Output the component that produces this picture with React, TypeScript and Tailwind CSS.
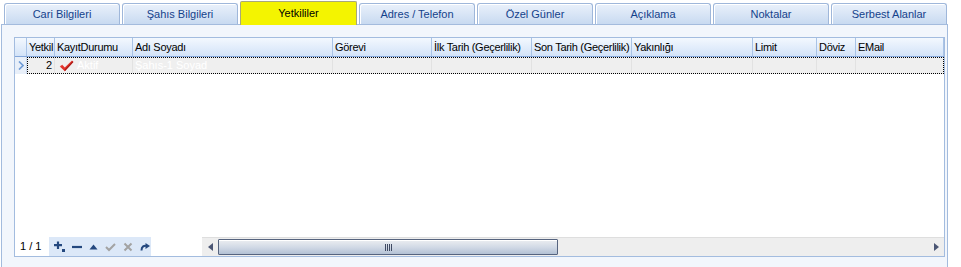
import React from "react";

const tabs = [
  "Cari Bilgileri",
  "Şahıs Bilgileri",
  "Yetkililer",
  "Adres / Telefon",
  "Özel Günler",
  "Açıklama",
  "Noktalar",
  "Serbest Alanlar",
];

const cols = [
  { w: 28, label: "Yetkil" },
  { w: 78, label: "KayıtDurumu" },
  { w: 200, label: "Adı Soyadı" },
  { w: 99, label: "Görevi" },
  { w: 100, label: "İlk Tarih (Geçerlilik)" },
  { w: 100, label: "Son Tarih (Geçerlilik)" },
  { w: 121, label: "Yakınlığı" },
  { w: 64, label: "Limit" },
  { w: 39, label: "Döviz" },
  { w: 88, label: "EMail" },
];

function Check() {
  return (
    <svg width="15" height="12" viewBox="0 0 15 12">
      <path d="M0.8 6.5 L3.2 4.8 L5.8 7.4 L13 0.6 L14.4 2 L5.8 11.2 Z" fill="#e3322b" />
      <path d="M5.8 11.2 L14.4 2 L13.6 1.3 L5.8 9.4 Z" fill="#a51a14" />
      <path d="M0.8 6.5 L3.2 4.8 L3.6 5.2 L1.6 6.8 Z" fill="#f06a62" />
    </svg>
  );
}

export default function App() {
  return (
    <div
      className="w-[961px] h-[267px] bg-white overflow-hidden flex flex-col text-[11px]"
      style={{ fontFamily: '"Liberation Sans", Arial, sans-serif' }}
    >
      {/* tab strip */}
      <div className="h-[24px] flex items-end pl-[4px] gap-[2px] relative z-10">
        {tabs.map((t) =>
          t === "Yetkililer" ? (
            <div
              key={t}
              className="w-[117px] h-[24px] -mb-[1px] border border-b-0 border-[#a8a87a] rounded-t-[2px] bg-[#f4f400] flex items-center justify-center text-black pb-[1px]"
            >
              {t}
            </div>
          ) : (
            <div
              key={t}
              className="w-[116px] h-[21px] border border-b-0 border-[#9fb7da] rounded-t-[3px] bg-gradient-to-b from-[#eaf1fb] to-[#c8daf1] shadow-[inset_1px_1px_0_#ffffff] flex items-center justify-center text-[#15428b] pt-[1px]"
            >
              {t}
            </div>
          )
        )}
      </div>

      {/* panel */}
      <div className="ml-[1px] w-[947px] flex-1 border border-b-0 border-[#a3bbdd] bg-[#f2f6fc] pl-[12px] pt-[12px]">
        <div className="w-[931px] h-[220px] border border-[#a3bcdf] bg-white flex flex-col">
          {/* header */}
          <div className="h-[19px] flex border-b border-[#83a6da] bg-gradient-to-b from-[#f3f8fe] to-[#d3e3f8]">
            <div className="w-[12px] border-r border-[#a9c3e6]" />
            {cols.map((c) => (
              <div
                key={c.label}
                style={{ width: c.w }}
                className="border-r border-[#a9c3e6] pl-[2px] flex items-center text-black whitespace-nowrap overflow-hidden tracking-[-0.3px]"
              >
                {c.label}
              </div>
            ))}
          </div>
          {/* row */}
          <div className="h-[17px] flex">
            <div className="w-[12px] bg-[#e8eff9] border-r border-[#c9d8ee] flex items-center justify-center">
              <svg width="6" height="9" viewBox="0 0 6 9">
                <path d="M1 0.5 L5 4.5 L1 8.5" stroke="#6d9ad6" strokeWidth="1.6" fill="none" />
              </svg>
            </div>
            <div className="flex-1 flex border border-dotted border-black bg-[#efefef]">
              {cols.map((c, i) => (
                <div
                  key={c.label}
                  style={{ width: i === 0 ? c.w - 1 : i === cols.length - 1 ? c.w - 1 : c.w }}
                  className={`flex items-center whitespace-nowrap overflow-hidden ${
                    i === cols.length - 1 ? "" : "border-r border-[#e2e2e2]"
                  } ${i === 0 ? "justify-end pr-[2px] text-black" : "pl-[2px] text-white"}`}
                >
                  {i === 0 && "2"}
                  {i === 1 && (
                    <span className="flex items-center gap-[3px] pl-[2px]">
                      <Check />
                      Aktif
                    </span>
                  )}
                  {i === 2 && "Şahıs-1 Soyad"}
                </div>
              ))}
            </div>
          </div>
          <div className="flex-1" />
          {/* footer */}
          <div className="h-[19px] flex items-stretch">
            <div className="w-[34px] flex items-center pl-[5px] text-black">1 / 1</div>
            <div className="w-[102px] bg-[#dce8f8] flex items-center pl-[5px] gap-[7px]">
              <svg width="11" height="11" viewBox="0 0 11 11">
                <path d="M4 0.5 V8 M0 4.2 H8" stroke="#24487f" strokeWidth="2.2" />
                <rect x="8" y="8" width="3" height="3" fill="#24487f" />
              </svg>
              <svg width="10" height="10" viewBox="0 0 10 10">
                <path d="M0 5 H10" stroke="#24487f" strokeWidth="2.2" />
              </svg>
              <svg width="9" height="10" viewBox="0 0 9 10">
                <path d="M0.5 7.5 L4.5 2.5 L8.5 7.5 Z" fill="#24487f" />
              </svg>
              <svg width="11" height="10" viewBox="0 0 11 10">
                <path d="M1 5 L4 8 L10 2" stroke="#a3a3a3" strokeWidth="2" fill="none" />
              </svg>
              <svg width="10" height="10" viewBox="0 0 10 10">
                <path d="M1.5 1.5 L8.5 8.5 M8.5 1.5 L1.5 8.5" stroke="#a3a3a3" strokeWidth="2" />
              </svg>
              <svg width="10" height="10" viewBox="0 0 10 10">
                <path d="M1.5 8.5 C1.5 4.5 4 3 7 4" stroke="#24487f" strokeWidth="2" fill="none" />
                <path d="M5.5 1 L10 4 L5.5 7 Z" fill="#24487f" />
              </svg>
            </div>
            <div className="w-[51px]" />
            {/* scrollbar */}
            <div className="flex-1 bg-[#eeeeee] border-t border-[#dedede] flex items-center">
              <div className="w-[16px] flex justify-center">
                <svg width="5" height="8" viewBox="0 0 5 8">
                  <path d="M5 0 L0 4 L5 8 Z" fill="#4b5674" />
                </svg>
              </div>
              <div className="w-[340px] h-[16px] border border-[#56647f] rounded-[1px] bg-gradient-to-b from-[#eceef1] via-[#d2dae6] to-[#b3c1d5] flex items-center justify-center gap-[1px] shadow-[inset_0_1px_0_#ffffff]">
                {[0, 1, 2, 3].map((k) => (
                  <div key={k} className="w-[1px] h-[7px] bg-[#3f4a63]" />
                ))}
              </div>
              <div className="flex-1" />
              <div className="w-[16px] flex justify-center">
                <svg width="5" height="8" viewBox="0 0 5 8">
                  <path d="M0 0 L5 4 L0 8 Z" fill="#4b5674" />
                </svg>
              </div>
            </div>
          </div>
        </div>
      </div>
    </div>
  );
}
